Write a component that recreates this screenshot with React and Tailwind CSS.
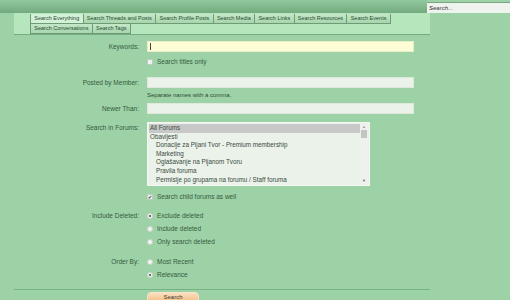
import React from "react";

const tabsTop = ["Search Everything", "Search Threads and Posts", "Search Profile Posts", "Search Media", "Search Links", "Search Resources", "Search Events"];
const tabsBottom = ["Search Conversations", "Search Tags"];

const forums = [
  { label: "All Forums", selected: true },
  { label: "Obavijesti" },
  { label: "Donacije za Pijani Tvor - Premium membership", sub: true },
  { label: "Marketing", sub: true },
  { label: "Oglašavanje na Pijanom Tvoru", sub: true },
  { label: "Pravila foruma", sub: true },
  { label: "Permisije po grupama na forumu / Staff foruma", sub: true },
];

function Tab({ label, active }) {
  return (
    <div
      className={
        "flex h-[10px] items-center border-r border-b border-[#6f9c77] px-[3.3px] text-[5.5px] leading-none text-[#2c4a32] " +
        (active ? "bg-[#d3f1d6]" : "bg-gradient-to-b from-[#c4e8c8] to-[#a7d6ad]")
      }
    >
      {label}
    </div>
  );
}

function Row({ label, children, className = "", lead = "leading-[11px]" }) {
  return (
    <div className={"flex " + className}>
      <div className={"w-[139px] shrink-0 text-right text-[6.5px] text-[#365a3c] " + lead}>{label}</div>
      <div className="ml-[8px] flex-1">{children}</div>
    </div>
  );
}

function Check({ checked, label }) {
  return (
    <div className="flex h-[10px] items-center gap-[4px] text-[6.5px] text-[#365a3c]">
      <span className="flex h-[6px] w-[6px] items-center justify-center border border-[#c3c9c3] bg-[#eef1ee] text-[5px] leading-none text-[#333]">
        {checked ? "✔" : ""}
      </span>
      {label}
    </div>
  );
}

function Radio({ checked, label }) {
  return (
    <div className="flex h-[13px] items-center gap-[4px] text-[6.5px] text-[#365a3c]">
      <span className="flex h-[6px] w-[6px] items-center justify-center rounded-full border border-[#cdd3cd] bg-[#f2f4f2]">
        {checked && <span className="h-[2px] w-[2px] rounded-full bg-[#444]" />}
      </span>
      {label}
    </div>
  );
}

export default function App() {
  return (
    <div className="h-[300px] w-[510px] overflow-hidden bg-[#9dd2a7]" style={{ fontFamily: '"Liberation Sans", Arial, sans-serif' }}>
      <div className="flex h-[13px]">
        <div className="w-[427px] bg-gradient-to-b from-[#93c99f] to-[#72a97d]" />
        <div className="mt-[2px] flex h-[11px] flex-1 items-center border-t border-[#7aa783] bg-[#eef3ee] px-[2px] text-[6px] italic text-[#333]">
          Search...
        </div>
      </div>

      <div className="ml-[14px] w-[416px] border-b border-[#74ad7f] bg-[#b6e6bc] pl-[16px] pt-[1px]">
        <div className="flex border-l border-[#6f9c77]">
          {tabsTop.map((t, i) => (
            <Tab key={t} label={t} active={i === 0} />
          ))}
        </div>
        <div className="flex border-l border-[#6f9c77]">
          {tabsBottom.map((t) => (
            <Tab key={t} label={t} />
          ))}
        </div>
      </div>

      <div className="mt-[6px]">
        <Row label="Keywords:">
          <div className="flex h-[11px] w-[267px] items-center border border-[#e8ecc8] bg-[#fdfdd6] px-[2px]">
            <span className="h-[7px] w-px bg-[#444]" />
          </div>
        </Row>
        <Row label="" className="mt-[5px]">
          <Check label="Search titles only" />
        </Row>
        <Row label="Posted by Member:" className="mt-[10px]">
          <div className="h-[11px] w-[267px] border border-[#dfe8df] bg-[#eaf2ea]" />
          <div className="mt-[3px] text-[6px] leading-[8px] text-[#2f4a33]">Separate names with a comma.</div>
        </Row>
        <Row label="Newer Than:" className="mt-[4px]">
          <div className="h-[11px] w-[267px] border border-[#dfe8df] bg-[#eaf2ea]" />
        </Row>
        <Row label="Search in Forums:" className="mt-[8px]">
          <div className="flex h-[64px] w-[223px] border border-[#f4f7f4] bg-[#eaf2ea] p-px">
            <div className="flex-1 overflow-hidden whitespace-nowrap text-[6.3px] leading-[8.6px] text-[#3a4a3c]">
              {forums.map((f) => (
                <div key={f.label} className={(f.sub ? "pl-[7px] " : "pl-px ") + (f.selected ? "bg-[#c8c8c8]" : "")}>
                  {f.label}
                </div>
              ))}
            </div>
            <div className="flex w-[8px] flex-col items-center bg-[#eef1ee]">
              <span className="text-[4px] leading-[6px] text-[#999]">▲</span>
              <span className="h-[8px] w-[6px] bg-[#c2c6c2]" />
              <span className="mt-auto text-[4px] leading-[6px] text-[#666]">▼</span>
            </div>
          </div>
          <div className="mt-[6px]">
            <Check checked label="Search child forums as well" />
          </div>
        </Row>
        <Row label="Include Deleted:" className="mt-[7px]" lead="leading-[13px]">
          <Radio checked label="Exclude deleted" />
          <Radio label="Include deleted" />
          <Radio label="Only search deleted" />
        </Row>
        <Row label="Order By:" className="mt-[7px]" lead="leading-[13px]">
          <Radio label="Most Recent" />
          <Radio checked label="Relevance" />
        </Row>
      </div>

      <div className="ml-[14px] mt-[8px] h-px w-[416px] bg-[#78b483]" />
      <div className="ml-[147px] mt-[2px] flex h-[12px] w-[52px] items-start justify-center rounded-t-[4px] border border-[#f6e2c8] bg-gradient-to-b from-[#fbe0bf] to-[#f2b77c] pt-[1px] text-[6px] leading-[7px] text-[#3a3a3a]">
        Search
      </div>
    </div>
  );
}
